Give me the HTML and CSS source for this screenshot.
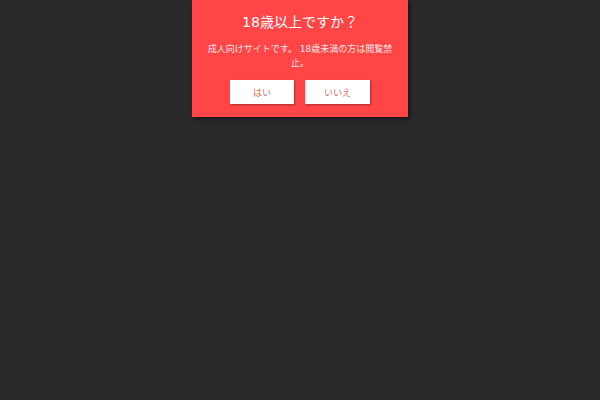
FILE: index.html
```html
<!DOCTYPE html>
<html lang="ja">
<head>
<meta charset="utf-8">
<title>年齢確認</title>
<link rel="stylesheet" href="styles.css">
</head>
<body>
<div class="overlay">
  <div class="modal">
    <h1 class="modal-title">18歳以上ですか？</h1>
    <p class="modal-text">成人向けサイトです。 18歳未満の方は閲覧禁止。</p>
    <div class="modal-actions">
      <button class="btn btn-yes">はい</button>
      <button class="btn btn-no">いいえ</button>
    </div>
  </div>
</div>
</body>
</html>
```
FILE: styles.css
```css
html, body {
  margin: 0;
  padding: 0;
  height: 100%;
}
body {
  background: #292929;
  font-family: "DejaVu Sans", "Noto Sans CJK JP", sans-serif;
}
.overlay {
  display: flex;
  justify-content: center;
  align-items: flex-start;
}
.modal {
  width: 216px;
  box-sizing: border-box;
  background: #ff4545;
  padding: 12px 12px 13px;
  box-shadow: 2px 2px 4px rgba(0, 0, 0, 0.45);
  text-align: center;
}
.modal-title {
  margin: 0;
  font-size: 14px;
  line-height: 20px;
  font-weight: normal;
  color: #fff;
}
.modal-text {
  margin: 10px 0 0;
  font-size: 9px;
  line-height: 14px;
  color: #fde6e6;
}
.modal-actions {
  margin-top: 10px;
  display: flex;
  justify-content: center;
  gap: 11px;
}
.btn {
  height: 24px;
  border: none;
  background: #fff;
  color: #d86a6a;
  font-family: inherit;
  font-size: 9px;
  padding: 0;
  box-shadow: 1px 1px 2px rgba(0, 0, 0, 0.35);
}
.btn-yes { width: 64px; }
.btn-no { width: 65px; }
```
